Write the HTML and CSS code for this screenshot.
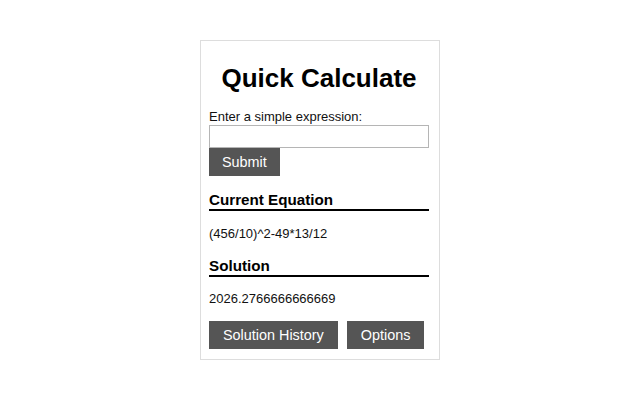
FILE: index.html
```html
<!DOCTYPE html>
<html lang="en">
<head>
    <meta charset="UTF-8">
    <meta name="viewport" content="width=device-width, initial-scale=1.0">
    <title>Quick Calculate</title>
    <link rel="stylesheet" href="styles.css">
</head>
<body>
    <div class="popup">
        <h1>Quick Calculate</h1>

        <form id="calcForm">
            <label for="expression">Enter a simple expression:</label>
            <input type="text" id="expression" name="expression">
            <input type="submit" class="btn" value="Submit">
        </form>

        <h3>Current Equation</h3>
        <p id="equation" class="equation">(456/10)^2-49*13/12</p>

        <h3>Solution</h3>
        <p id="solution" class="solution">2026.2766666666669</p>

        <div class="actions">
            <button class="btn" type="button">Solution History</button>
            <button class="btn" type="button">Options</button>
        </div>
    </div>
</body>
</html>
```

FILE: styles.css
```css
html, body {
    height: 100%;
}
body {
    margin: 0;
    font-family: "Liberation Sans", Arial, sans-serif;
    font-size: 13px;
    line-height: 15px;
    color: #111;
    background: #fff;
    display: flex;
    align-items: center;
    justify-content: center;
}
.popup {
    width: 240px;
    box-sizing: border-box;
    border: 1px solid #ddd;
    padding: 22px 10px 10px 8px;
}
h1 {
    margin: 0 0 16px;
    font-size: 26px;
    line-height: 30px;
    text-align: center;
    color: #000;
}
label {
    display: block;
    margin-bottom: 1px;
}
#expression {
    display: block;
    width: 220px;
    height: 23px;
    box-sizing: border-box;
    margin: 0;
    border: 1px solid #b5b5b5;
    font-family: inherit;
    font-size: 13px;
}
.btn {
    height: 28px;
    margin: 0;
    padding: 0 14px;
    border: none;
    background-color: #555;
    color: #fff;
    font-family: inherit;
    font-size: 14.4px;
    cursor: pointer;
}
.btn:hover {
    background-color: #444;
}
#calcForm .btn {
    display: block;
    padding: 0 13px;
    margin-bottom: 15px;
}
h3 {
    margin: 0;
    font-size: 15.2px;
    line-height: 18px;
    color: #000;
    border-bottom: 2px solid #000;
}
.equation {
    margin: 15px 0 16px;
}
.solution {
    margin: 14px 0 15px;
}
.actions {
    display: flex;
    gap: 9px;
}
```
